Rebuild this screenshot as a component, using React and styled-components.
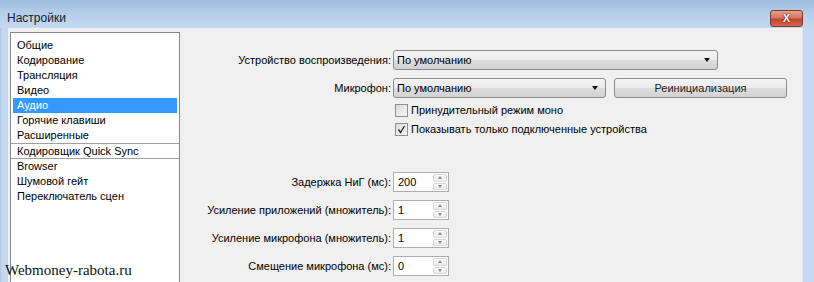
import React, { useState } from 'react'
import styled, { createGlobalStyle } from 'styled-components'

const GlobalStyle = createGlobalStyle`
  html, body { margin: 0; padding: 0; overflow: hidden; }
  body { font-family: "Liberation Sans", Arial, sans-serif; }
`

const Window = styled.div`
  width: 814px;
  height: 282px;
  display: flex;
  flex-direction: column;
  background: linear-gradient(90deg, #a7c3e2 0px, #c4d9ef 2px, #c4d9ef 100%);
  position: relative;
  overflow: hidden;
`

const TitleBar = styled.div`
  height: 28px;
  flex: none;
  display: flex;
  align-items: center;
  justify-content: space-between;
  padding: 0 11px 0 7px;
  background: linear-gradient(#9dbde0 0%, #b3cdea 45%, #c5daf0 100%);
`

const Title = styled.span`
  font-size: 12px;
  color: #14202e;
  margin-top: 8px;
`

const CloseButton = styled.div`
  width: 31px;
  height: 15px;
  margin-top: 8px;
  border: 1px solid #7c3a2e;
  border-radius: 3px;
  background: linear-gradient(#e9a08c 0%, #d47560 45%, #c0432c 55%, #d5684c 100%);
  display: flex;
  align-items: center;
  justify-content: center;
  color: #fff;
  font-weight: bold;
  font-size: 11px;
  text-shadow: 0 0 2px #5a1a10, 0 0 1px #5a1a10;
`

const Body = styled.div`
  flex: 1;
  display: flex;
  margin: 0 11px 0 8px;
  background: #f0f0f0;
  border-right: 1px solid #dfe5ec;
  min-height: 0;
`

const Sidebar = styled.div`
  width: 170px;
  box-sizing: border-box;
  margin: 4px 0 0 2px;
  height: 270px;
  flex: none;
  background: #fff;
  border: 1px solid #828790;
  padding-top: 5px;
`

const Item = styled.div`
  height: ${p => (p.$divided ? '16px' : '15px')};
  box-sizing: border-box;
  line-height: 14px;
  font-size: 11px;
  padding-left: ${p => (p.$active ? '4px' : '6px')};
  margin: ${p => (p.$active ? '0 2px' : '0')};
  color: ${p => (p.$active ? '#fff' : '#000')};
  background: ${p => (p.$active ? '#3399ff' : 'transparent')};
  border-top: ${p => (p.$divided ? '1px solid #a0a0a0' : 'none')};
  border-bottom: ${p => (p.$divided ? '1px solid #a0a0a0' : 'none')};
  white-space: nowrap;
`

const Panel = styled.div`
  flex: 1;
  padding-top: 22px;
  display: flex;
  flex-direction: column;
`

const Section = styled.div`
  display: grid;
  grid-template-columns: 211px auto;
  column-gap: 2px;
  row-gap: ${p => p.$gap}px;
  align-items: center;
  margin-top: ${p => p.$top || 0}px;
`

const Label = styled.div`
  text-align: right;
  font-size: 11px;
  color: #000;
  white-space: nowrap;
`

const Controls = styled.div`
  display: flex;
  align-items: center;
  gap: 8px;
`

const Select = styled.div`
  width: ${p => p.$width}px;
  height: 20px;
  box-sizing: border-box;
  border: 1px solid #8b8b8b;
  border-radius: 3px;
  background: linear-gradient(#f3f3f3 0%, #ebebeb 50%, #dddddd 51%, #d3d3d3 100%);
  display: flex;
  align-items: center;
  justify-content: space-between;
  padding: 0 7px 0 3px;
  font-size: 11px;
  color: #000;
`

const Arrow = styled.span`
  width: 0;
  height: 0;
  border-left: 3.5px solid transparent;
  border-right: 3.5px solid transparent;
  border-top: 4px solid #111;
`

const Button = styled.div`
  width: 173px;
  height: 20px;
  box-sizing: border-box;
  border: 1px solid #8b8b8b;
  border-radius: 3px;
  background: linear-gradient(#f3f3f3 0%, #ebebeb 50%, #dddddd 51%, #d3d3d3 100%);
  display: flex;
  align-items: center;
  justify-content: center;
  font-size: 11px;
  color: #222;
`

const CheckRow = styled.label`
  grid-column: 2;
  display: flex;
  align-items: center;
  gap: 3px;
  font-size: 11px;
  color: #000;
  height: 14px;
  padding-left: 2px;
`

const Box = styled.span`
  width: 13px;
  height: 13px;
  box-sizing: border-box;
  border: 1px solid #8e8f8f;
  background: linear-gradient(135deg, #dcdcdc, #f6f6f6);
  display: flex;
  align-items: center;
  justify-content: center;
`

const Spin = styled.div`
  width: 56px;
  height: 20px;
  box-sizing: border-box;
  border: 1px solid #abadb3;
  background: #fff;
  display: flex;
  font-size: 11px;
  color: #000;
`

const SpinValue = styled.div`
  flex: 1;
  padding: 3px 0 0 4px;
`

const SpinButtons = styled.div`
  width: 14px;
  display: flex;
  flex-direction: column;
  gap: 1px;
  padding: 1px 1px 1px 0;
`

const SpinButton = styled.div`
  flex: 1;
  border: 1px solid #d6d6d6;
  border-radius: 2px;
  background: linear-gradient(#fbfbfb, #ececec);
  display: flex;
  align-items: center;
  justify-content: center;
  &::after {
    content: '';
    border-left: 2.5px solid transparent;
    border-right: 2.5px solid transparent;
    ${p => (p.$down ? 'border-top: 3px solid #8a8a8a;' : 'border-bottom: 3px solid #8a8a8a;')}
  }
`

const Watermark = styled.div`
  position: absolute;
  left: 5px;
  top: 262px;
  font-family: "Liberation Serif", "Times New Roman", serif;
  font-size: 15px;
  color: #111;
`

const pages = [
  'Общие', 'Кодирование', 'Трансляция', 'Видео', 'Аудио', 'Горячие клавиши',
  'Расширенные', 'Кодировщик Quick Sync', 'Browser', 'Шумовой гейт', 'Переключатель сцен',
]

const spins = [
  ['Задержка НиГ (мс):', '200'],
  ['Усиление приложений (множитель):', '1'],
  ['Усиление микрофона (множитель):', '1'],
  ['Смещение микрофона (мс):', '0'],
]

const Check = ({ checked }) => (
  <Box>
    {checked && (
      <svg width="9" height="9" viewBox="0 0 9 9">
        <path d="M1.5 4.5 L3.5 7.5 L7.5 1" fill="none" stroke="#2a2a2a" strokeWidth="1.4" />
      </svg>
    )}
  </Box>
)

const App = () => {
  const [active, setActive] = useState('Аудио')

  return (
    <Window>
      <GlobalStyle />
      <TitleBar>
        <Title>Настройки</Title>
        <CloseButton>X</CloseButton>
      </TitleBar>
      <Body>
        <Sidebar>
          {pages.map(p => (
            <Item
              key={p}
              $active={p === active}
              $divided={p === 'Кодировщик Quick Sync'}
              onClick={() => setActive(p)}
            >
              {p}
            </Item>
          ))}
        </Sidebar>
        <Panel>
          <Section $gap={8}>
            <Label>Устройство воспроизведения:</Label>
            <Select $width={325}>По умолчанию<Arrow /></Select>
            <Label>Микрофон:</Label>
            <Controls>
              <Select $width={213}>По умолчанию<Arrow /></Select>
              <Button>Реинициализация</Button>
            </Controls>
          </Section>
          <Section $gap={5} $top={5}>
            <CheckRow><Check />Принудительный режим моно</CheckRow>
            <CheckRow><Check checked />Показывать только подключенные устройства</CheckRow>
          </Section>
          <Section $gap={8} $top={36}>
            {spins.map(([label, value]) => (
              <React.Fragment key={label}>
                <Label>{label}</Label>
                <Spin>
                  <SpinValue>{value}</SpinValue>
                  <SpinButtons>
                    <SpinButton />
                    <SpinButton $down />
                  </SpinButtons>
                </Spin>
              </React.Fragment>
            ))}
          </Section>
        </Panel>
      </Body>
      <Watermark>Webmoney-rabota.ru</Watermark>
    </Window>
  )
}

export default App
